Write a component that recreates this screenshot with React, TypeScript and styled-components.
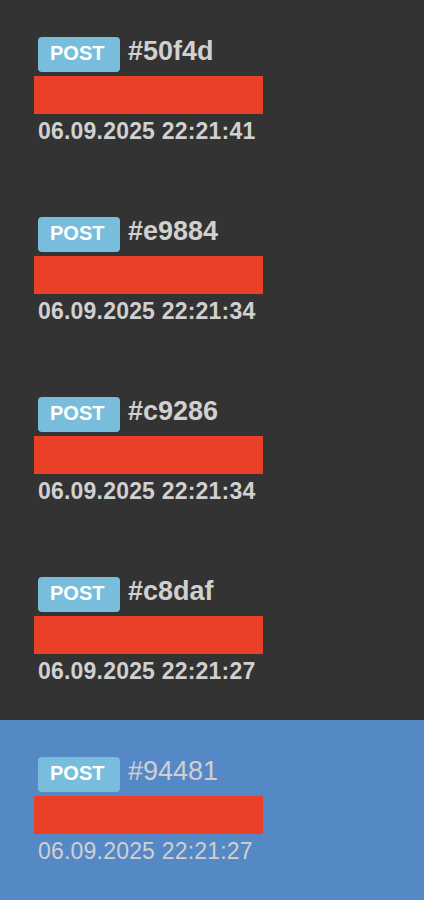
import React from "react";
import styled, { createGlobalStyle } from "styled-components";

const GlobalStyle = createGlobalStyle`
  html, body {
    margin: 0;
    padding: 0;
    background: #333333;
  }
  body {
    font-family: "Liberation Sans", Arial, Helvetica, sans-serif;
  }
`;

const List = styled.div`
  display: flex;
  flex-direction: column;
  width: 424px;
`;

const Item = styled.div<{ $active?: boolean }>`
  box-sizing: border-box;
  height: 180px;
  padding: 36px 0 0 38px;
  background: ${(p) => (p.$active ? "#5589c5" : "#333333")};
  display: flex;
  flex-direction: column;
  align-items: flex-start;
  color: #d0d0d0;
  font-weight: ${(p) => (p.$active ? 400 : 700)};
`;

const Header = styled.div`
  display: flex;
  align-items: baseline;
  gap: 8px;
  height: 35px;
`;

const Badge = styled.span`
  box-sizing: border-box;
  display: inline-block;
  width: 82px;
  height: 35px;
  padding: 5px 0 7px 12px;
  line-height: 23px;
  font-size: 20px;
  font-weight: 700;
  color: #ffffff;
  background: #78bedc;
  border-radius: 4px;
`;

const Hash = styled.span`
  font-size: 27px;
  line-height: 30px;
`;

const Redacted = styled.div`
  width: 229px;
  height: 38px;
  margin: 5px 0 0 -4px;
  background: #e94027;
`;

const DateText = styled.div`
  margin-top: 4px;
  font-size: 23px;
  line-height: 26px;
  letter-spacing: 0.2px;
`;

const items = [
  { id: "#50f4d", date: "06.09.2025 22:21:41" },
  { id: "#e9884", date: "06.09.2025 22:21:34" },
  { id: "#c9286", date: "06.09.2025 22:21:34" },
  { id: "#c8daf", date: "06.09.2025 22:21:27" },
  { id: "#94481", date: "06.09.2025 22:21:27", active: true },
];

export default function App() {
  return (
    <>
      <GlobalStyle />
      <List>
        {items.map((it) => (
          <Item key={it.id} $active={it.active}>
            <Header>
              <Badge>POST</Badge>
              <Hash>{it.id}</Hash>
            </Header>
            <Redacted />
            <DateText>{it.date}</DateText>
          </Item>
        ))}
      </List>
    </>
  );
}
